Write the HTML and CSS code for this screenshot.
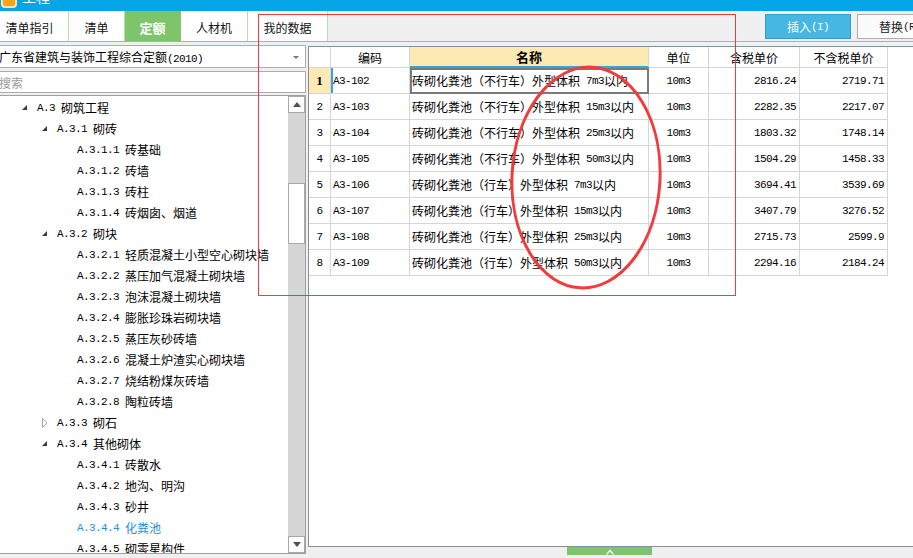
FILE: index.html
```html
<!DOCTYPE html>
<html lang="zh-CN">
<head>
<meta charset="utf-8">
<link rel="stylesheet" href="styles.css">
</head>
<body>
<div class="app">
  <div class="titlebar"><span class="logo"></span><span class="title">工程</span></div>
  <div class="tabbar">
    <div class="tabs">
      <div class="tab t1">清单指引</div>
      <div class="tab t2">清单</div>
      <div class="tab t3 active">定额</div>
      <div class="tab t4">人材机</div>
      <div class="tab t5">我的数据</div>
    </div>
    <div class="actions">
      <div class="btn primary">插入<span class="m">(I)</span></div>
      <div class="btn">替换<span class="m">(R)</span></div>
    </div>
  </div>
  <div class="main">
    <aside class="left">
      <div class="select"><span>广东省建筑与装饰工程综合定额<span class="m">(2010)</span></span><span class="caret"></span></div>
      <div class="search">搜索</div>
      <div class="tree">
        <div class="list">
          <div class="node l1"><span class="exp"></span><span class="m">A.3 </span>砌筑工程</div>
          <div class="node l2"><span class="exp"></span><span class="m">A.3.1 </span>砌砖</div>
          <div class="node l3"><span class="m">A.3.1.1 </span>砖基础</div>
          <div class="node l3"><span class="m">A.3.1.2 </span>砖墙</div>
          <div class="node l3"><span class="m">A.3.1.3 </span>砖柱</div>
          <div class="node l3"><span class="m">A.3.1.4 </span>砖烟囱、烟道</div>
          <div class="node l2"><span class="exp"></span><span class="m">A.3.2 </span>砌块</div>
          <div class="node l3"><span class="m">A.3.2.1 </span>轻质混凝土小型空心砌块墙</div>
          <div class="node l3"><span class="m">A.3.2.2 </span>蒸压加气混凝土砌块墙</div>
          <div class="node l3"><span class="m">A.3.2.3 </span>泡沫混凝土砌块墙</div>
          <div class="node l3"><span class="m">A.3.2.4 </span>膨胀珍珠岩砌块墙</div>
          <div class="node l3"><span class="m">A.3.2.5 </span>蒸压灰砂砖墙</div>
          <div class="node l3"><span class="m">A.3.2.6 </span>混凝土炉渣实心砌块墙</div>
          <div class="node l3"><span class="m">A.3.2.7 </span>烧结粉煤灰砖墙</div>
          <div class="node l3"><span class="m">A.3.2.8 </span>陶粒砖墙</div>
          <div class="node l2"><svg class="col" width="6" height="10" viewBox="0 0 6 10"><polygon points="0.5,0.5 5,5 0.5,9.5" fill="none" stroke="#a8a8a8" stroke-width="1"/></svg><span class="m">A.3.3 </span>砌石</div>
          <div class="node l2"><span class="exp"></span><span class="m">A.3.4 </span>其他砌体</div>
          <div class="node l3"><span class="m">A.3.4.1 </span>砖散水</div>
          <div class="node l3"><span class="m">A.3.4.2 </span>地沟、明沟</div>
          <div class="node l3"><span class="m">A.3.4.3 </span>砂井</div>
          <div class="node l3 sel"><span class="m">A.3.4.4 </span>化粪池</div>
          <div class="node l3"><span class="m">A.3.4.5 </span>砌零星构件</div>
        </div>
        <div class="sbar">
          <div class="sbtn"><span class="up"></span></div>
          <div class="track"><div class="thumb"></div></div>
          <div class="sbtn"><span class="down"></span></div>
        </div>
      </div>
    </aside>
    <section class="right">
      <div class="panel">
        <div class="row head">
          <div class="c"></div>
          <div class="c">编码</div>
          <div class="c name-h">名称</div>
          <div class="c">单位</div>
          <div class="c">含税单价</div>
          <div class="c">不含税单价</div>
        </div>
        <div class="row">
          <div class="c rn cur">1</div>
          <div class="c code curcode"><span class="m">A3-102</span></div>
          <div class="c name selcell">砖砌化粪池（不行车）外型体积<span class="m"> 7m3</span>以内</div>
          <div class="c unit"><span class="m">10m3</span></div>
          <div class="c num m">2816.24</div>
          <div class="c num m">2719.71</div>
        </div>
        <div class="row">
          <div class="c rn m">2</div>
          <div class="c code"><span class="m">A3-103</span></div>
          <div class="c name">砖砌化粪池（不行车）外型体积<span class="m"> 15m3</span>以内</div>
          <div class="c unit"><span class="m">10m3</span></div>
          <div class="c num m">2282.35</div>
          <div class="c num m">2217.07</div>
        </div>
        <div class="row">
          <div class="c rn m">3</div>
          <div class="c code"><span class="m">A3-104</span></div>
          <div class="c name">砖砌化粪池（不行车）外型体积<span class="m"> 25m3</span>以内</div>
          <div class="c unit"><span class="m">10m3</span></div>
          <div class="c num m">1803.32</div>
          <div class="c num m">1748.14</div>
        </div>
        <div class="row">
          <div class="c rn m">4</div>
          <div class="c code"><span class="m">A3-105</span></div>
          <div class="c name">砖砌化粪池（不行车）外型体积<span class="m"> 50m3</span>以内</div>
          <div class="c unit"><span class="m">10m3</span></div>
          <div class="c num m">1504.29</div>
          <div class="c num m">1458.33</div>
        </div>
        <div class="row">
          <div class="c rn m">5</div>
          <div class="c code"><span class="m">A3-106</span></div>
          <div class="c name">砖砌化粪池（行车）外型体积<span class="m"> 7m3</span>以内</div>
          <div class="c unit"><span class="m">10m3</span></div>
          <div class="c num m">3694.41</div>
          <div class="c num m">3539.69</div>
        </div>
        <div class="row">
          <div class="c rn m">6</div>
          <div class="c code"><span class="m">A3-107</span></div>
          <div class="c name">砖砌化粪池（行车）外型体积<span class="m"> 15m3</span>以内</div>
          <div class="c unit"><span class="m">10m3</span></div>
          <div class="c num m">3407.79</div>
          <div class="c num m">3276.52</div>
        </div>
        <div class="row">
          <div class="c rn m">7</div>
          <div class="c code"><span class="m">A3-108</span></div>
          <div class="c name">砖砌化粪池（行车）外型体积<span class="m"> 25m3</span>以内</div>
          <div class="c unit"><span class="m">10m3</span></div>
          <div class="c num m">2715.73</div>
          <div class="c num m">2599.9</div>
        </div>
        <div class="row">
          <div class="c rn m">8</div>
          <div class="c code"><span class="m">A3-109</span></div>
          <div class="c name">砖砌化粪池（行车）外型体积<span class="m"> 50m3</span>以内</div>
          <div class="c unit"><span class="m">10m3</span></div>
          <div class="c num m">2294.16</div>
          <div class="c num m">2184.24</div>
        </div>
      </div>
      <div class="handlebar">
        <div class="handle"><svg width="10" height="7" viewBox="0 0 10 7"><polyline points="1.5,6.5 5,2.5 8.5,6.5" fill="none" stroke="#e8f5e2" stroke-width="1.5"/></svg></div>
      </div>
    </section>
  </div>
  <svg class="annot" width="913" height="558" viewBox="0 0 913 558">
    <rect x="258.5" y="14.5" width="477" height="281" fill="none" stroke="#f23a3a" stroke-width="1"/>
    <ellipse cx="586" cy="177.5" rx="74" ry="110.5" fill="none" stroke="#f03c3c" stroke-width="3" transform="rotate(3 586 177.5)"/>
  </svg>
</div>
</body>
</html>
```

FILE: styles.css
```css
* { box-sizing: border-box; }
html, body { margin: 0; padding: 0; }
body {
  width: 913px;
  height: 558px;
  overflow: hidden;
  font-family: "Noto Sans CJK SC", "Liberation Sans", sans-serif;
  font-size: 12px;
  color: #000;
  background: #f0f0f0;
}
.app {
  position: relative;
  width: 913px;
  height: 558px;
  overflow: hidden;
  display: flex;
  flex-direction: column;
}
.m {
  font-family: "Liberation Mono", "DejaVu Sans Mono", monospace;
  font-size: 11px;
  letter-spacing: -0.6px;
  white-space: pre;
}

/* title bar */
.titlebar {
  height: 11px;
  flex: none;
  background: #04a6e8;
  display: flex;
  overflow: hidden;
}
.logo {
  width: 16px;
  height: 14px;
  margin-top: -6px;
  margin-left: 1px;
  border-radius: 4px;
  background: #f7a21b;
  border: 2px solid #fde3b0;
}
.title {
  margin-left: 5px;
  margin-top: -13px;
  color: #fff;
  font-size: 14px;
  line-height: 18px;
}

/* tab bar */
.tabbar {
  height: 31px;
  flex: none;
  display: flex;
  background: #f0f0f0;
  border-bottom: 1px solid #8ccb7a;
}
.tabs {
  display: flex;
  margin-left: -9px;
}
.tab {
  height: 30px;
  background: #fff;
  border-right: 1px solid #b7e2a6;
  display: flex;
  align-items: center;
  justify-content: center;
  padding-top: 3px;
  font-size: 12px;
  color: #111;
}
.t1 { width: 78px; }
.t2 { width: 56px; }
.t3 { width: 56px; }
.t4 { width: 67px; }
.t5 { width: 80px; }
.tab.active {
  background: #7dc46b;
  color: #fff;
  font-weight: bold;
  font-size: 13px;
  border-right-color: #7dc46b;
}
.actions {
  margin-left: auto;
  margin-right: -30px;
  display: flex;
  gap: 6px;
  padding-top: 3px;
}
.btn {
  width: 86px;
  height: 25px;
  border: 1px solid #adadad;
  background: #fbfbfb;
  display: flex;
  align-items: center;
  justify-content: center;
  font-size: 12px;
  color: #222;
}
.btn.primary {
  background: #46b6e3;
  border-color: #2f9ed0;
  color: #fff;
}
.btn .m { font-size: 11px; }

/* main */
.main {
  flex: 1;
  display: flex;
  gap: 2px;
  min-height: 0;
}
.left {
  width: 310px;
  margin-left: -4px;
  margin-top: 3px;
  display: flex;
  flex-direction: column;
  flex: none;
}
.select {
  height: 23px;
  border: 1px solid #acacac;
  background: #fff;
  display: flex;
  align-items: center;
  justify-content: space-between;
  padding: 0 6px 0 2px;
  white-space: nowrap;
}
.caret {
  width: 0;
  height: 0;
  border-left: 3px solid transparent;
  border-right: 3px solid transparent;
  border-top: 3px solid #777;
  margin-top: 2px;
}
.search {
  height: 22px;
  margin-top: 3px;
  border: 1px solid #acacac;
  background: #fff;
  color: #9a9a9a;
  display: flex;
  align-items: center;
  padding-left: 2px;
}
.tree {
  height: 459px;
  margin-top: 2px;
  border: 1px solid #a0a0a0;
  border-left-color: transparent;
  background: #fff;
  display: flex;
  overflow: hidden;
}
.list {
  flex: 1;
  overflow: hidden;
  padding-top: 1px;
}
.node {
  height: 21px;
  display: flex;
  align-items: center;
  white-space: nowrap;
}
.node.l1 { padding-left: 25px; }
.node.l2 { padding-left: 45px; }
.node.l3 { padding-left: 80px; }
.node.sel { color: #1b8fe8; }
.exp {
  width: 0;
  height: 0;
  border-left: 5px solid transparent;
  border-bottom: 5px solid #3a3a3a;
  margin-right: 10px;
}
.col { margin-right: 9px; flex: none; }
.sbar {
  width: 17px;
  flex: none;
  display: flex;
  flex-direction: column;
  background: #d6d6d6;
}
.sbtn {
  height: 17px;
  background: #fff;
  border: 1px solid #a9a9a9;
  display: flex;
  align-items: center;
  justify-content: center;
}
.up {
  width: 0; height: 0;
  border-left: 4px solid transparent;
  border-right: 4px solid transparent;
  border-bottom: 5px solid #505050;
}
.down {
  width: 0; height: 0;
  border-left: 4px solid transparent;
  border-right: 4px solid transparent;
  border-top: 5px solid #505050;
}
.track { flex: 1; }
.thumb {
  margin-top: 70px;
  height: 61px;
  background: #fff;
  border: 1px solid #a9a9a9;
}

/* right grid */
.right {
  flex: 1;
  margin-top: 4px;
  margin-right: -4px;
  display: flex;
  flex-direction: column;
}
.panel {
  height: 501px;
  background: #fff;
  border: 1px solid #8c8c96;
  border-right: none;
  overflow: hidden;
}
.row {
  display: grid;
  grid-template-columns: 22px 79px 239px 60px 91px 88px;
  height: 26px;
}
.row.head { height: 21px; }
.c {
  border-right: 1px solid #d6d6d6;
  border-bottom: 1px solid #d6d6d6;
  display: flex;
  align-items: center;
  white-space: nowrap;
  overflow: hidden;
}
.head .c { justify-content: center; }
.head .name-h {
  background: #fdeab3;
  font-weight: bold;
  font-size: 13px;
  border-bottom: 2px solid #3aa4d8;
}
.rn { justify-content: center; }
.rn.cur {
  background: #fde9b4;
  font-family: "Liberation Serif", serif;
  font-weight: bold;
  font-size: 13px;
}
.code { padding-left: 2px; }
.curcode { box-shadow: inset 2px 0 0 #3aa4d8; }
.name { padding-left: 2px; }
.selcell { outline: 2px solid #7a7a7a; outline-offset: -2px; }
.unit { justify-content: center; }
.num { justify-content: flex-end; padding-right: 3px; }
.handlebar {
  height: 9px;
  display: flex;
  justify-content: center;
}
.handle {
  width: 85px;
  height: 8px;
  background: #7dc46b;
  display: flex;
  justify-content: center;
  align-items: flex-end;
  margin-right: 6px;
}
.handle svg { display: block; }

.annot {
  position: absolute;
  left: 0;
  top: 0;
  pointer-events: none;
}
```
